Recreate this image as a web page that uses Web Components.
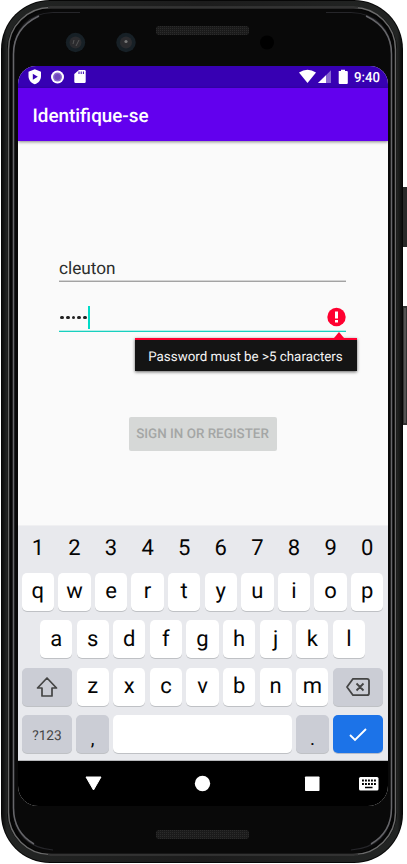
<!DOCTYPE html>
<html lang="pt"><head><meta charset="utf-8"><title>Identifique-se</title>
<style>html,body{margin:0;background:#fff}body{width:407px;height:864px;overflow:hidden;font-family:Roboto,"Noto Sans",sans-serif;text-rendering:geometricPrecision}</style></head>
<body>
<phone-frame>
<status-bar></status-bar>
<app-bar>Identifique-se</app-bar>
<login-form></login-form>
<soft-keyboard></soft-keyboard>
<nav-bar></nav-bar>
</phone-frame>
<script>
function define(name, html) {
  customElements.define(name, class extends HTMLElement {
    constructor() { super(); this.attachShadow({mode: 'open'}).innerHTML = html; }
  });
}
define('phone-frame', `<style>
:host{display:block;position:relative;box-sizing:border-box;width:407px;height:864px;padding:66px 19px 58px 18px}
svg{position:absolute;left:0;top:0}
main{position:relative;display:flex;flex-direction:column;width:370px;height:740px;border-radius:18px 18px 20px 20px;overflow:hidden;background:#fafafa}
</style>
<svg width="407" height="864">
<defs><pattern id="m" width="2" height="2" patternUnits="userSpaceOnUse"><rect width="2" height="2" fill="#1b1b1b"/><rect width="1" height="1" fill="#2b2b2b"/></pattern>
<linearGradient id="g" x1="0" x2="1" y1="0" y2="0"><stop offset="0" stop-color="#0c0c0c"/><stop offset=".012" stop-color="#222423"/><stop offset=".5" stop-color="#1c1c1c"/><stop offset=".988" stop-color="#222423"/><stop offset="1" stop-color="#0c0c0c"/></linearGradient></defs>
<rect x="402" y="187" width="6" height="60" rx="1" fill="#292929"/><rect x="402" y="306" width="6" height="119" rx="1" fill="#333"/><path d="M405 308V423" stroke="#777"/>
<rect x="1" y="0" width="402" height="863" rx="49" fill="#070707"/>
<rect x="2" y="1" width="400" height="861" rx="48" fill="url(#g)"/>
<rect x="7" y="7" width="390" height="848" rx="43" fill="#050505"/>
<rect x="8.500" y="7.500" width="387" height="847" rx="42" fill="none" stroke="#6a6a6a" stroke-width="1.500"/>
<path d="M48 7.500H358M48 854.500H358" stroke="#333" stroke-width="2"/>
<rect x="12" y="9" width="380" height="844.500" rx="40" fill="#090909"/>
<path d="M80 12.500H53C29 13 13.500 30 13.500 54V808C13.500 834 29 848 53 850M326 12.500H351C376 13 391.500 30 391.500 54V808C391.500 834 376 848 351 850" fill="none" stroke="#26262a" stroke-width="1.200"/>
<path d="M39 16Q13.500 28 13.500 54V808Q13.500 832 34 844M366 16Q391.500 28 391.500 54V808Q391.500 832 371 844" fill="none" stroke="#66666a" stroke-width="1.500"/>
<rect x="156" y="26" width="93" height="9" rx="3" fill="url(#m)"/><rect x="156" y="830" width="93" height="9" rx="3" fill="url(#m)"/>
<g><circle cx="75.500" cy="42.500" r="9.700" fill="#172026"/><circle cx="75.500" cy="42.500" r="6" fill="#2b2b2e"/><path d="M73 44l1-4M76 46l3-6" stroke="#555"/><circle cx="126" cy="42.500" r="9.700" fill="#172026"/><circle cx="126" cy="42.500" r="6" fill="#2b2b2e"/><circle cx="126" cy="41.500" r="1.600" fill="#777"/><circle cx="267" cy="42.500" r="7" fill="#000"/></g>
</svg><main><slot></slot></main>`);

define('status-bar', `<style>:host{display:block;height:22px;background:#3700b3;color:#fff}svg{display:block}text{font:500 14px Roboto,sans-serif}</style>
<svg width="370" height="22" fill="#fff"><path d="M16.800 3.200L23 5.800V10c0 4-2.500 7-6.200 8.300C13 17 10.500 14 10.500 10V5.800Z"/><path d="M14.800 7.800v6l5-3z" fill="#3700b3"/>
<circle cx="39.500" cy="11" r="6.500"/><circle cx="39.500" cy="11" r="4.500" fill="#8b68cf"/><circle cx="39.500" cy="11" r="3" fill="#7148bd"/>
<path d="M61 4h5.500q1.200 0 1.200 1.200v10.600q0 1.200-1.200 1.200h-9q-1.200 0-1.200-1.200V8z"/><path d="M61 5.500v2.500M63.200 5.500v2.500M65.400 5.500v2.500" stroke="#3700b3"/>
<path d="M281 6.500Q289.500 1 298 6.500L289.500 17z"/><path d="M300 17L313 4.200V17z" fill-opacity=".4"/><path d="M300 17l8-7.800V17z"/><path d="M320.700 5H323V3.700h4V5h1.800q1 0 1 1V17q0 1-1 1h-7.100q-1 0-1-1z"/>
<text x="336" y="16.300" textLength="26" lengthAdjust="spacingAndGlyphs">9:40</text></svg>`);

define('app-bar', `<style>:host{display:flex;align-items:center;box-sizing:border-box;height:52.500px;flex:none;padding:3px 14.500px 0;background:#6200ee;color:#fff;font-size:18.850px;font-weight:500;box-shadow:0 1px 3px #0007;z-index:1}</style><slot></slot>`);

define('error-tip', `<style>:host{position:absolute;right:-11px;top:56px;width:222px;height:33px;box-sizing:border-box;border-top:2px solid #ff0030;background:#141414;color:#f5f5f5;font-size:13.350px;line-height:36px;text-align:center;text-indent:-1px;box-shadow:0 1px 3px #0009;white-space:nowrap}
:host::before{content:"";position:absolute;right:13px;top:-8px;border:5px solid transparent;border-top:0;border-bottom:6px solid #ff0030}</style><slot></slot>`);

define('login-form', `<style>
:host{display:flex;flex-direction:column;align-items:center;box-sizing:border-box;height:384px;flex:none;padding:111.500px 1px 0 0}
.f{position:relative;width:287px;box-sizing:border-box;font-size:17.200px;color:#2b2d2c;height:30px;line-height:35px;border-bottom:1px solid #a3a3a3;box-shadow:0 -1px 0 #d4d4d4 inset}
.p{height:50px;border-color:#18d0bf;box-shadow:0 -1px 0 #b5eee8 inset}
.dots{display:flex;align-items:center;position:relative;gap:2px;height:23px;margin:24px 0 0 1px}
.dots b{width:3.800px;height:3.800px;border-radius:50%;background:#222}.dots i{width:2px;height:23px;background:#00dcc8;margin-left:-.500px}
.p svg{position:absolute;right:0;top:25px}
button{margin:84.500px 0 0 0;width:148px;height:34px;padding:2px 0 0;border:0;border-radius:2px;background:#d6d8d7;color:#a4a6a5;font:500 13.400px/32px Roboto,sans-serif;text-rendering:inherit;white-space:nowrap}
</style><div class="f">cleuton</div><div class="f p"><div class="dots"><b></b><b></b><b></b><b></b><b></b><i></i></div>
<svg width="19" height="20"><circle cx="9.500" cy="10" r="9.200" fill="#ff0030"/><path d="M8 4.500h3v7H8zM8 13h3v2.500H8z" fill="#fff"/></svg><error-tip>Password must be &gt;5 characters</error-tip></div><button disabled>SIGN IN OR REGISTER</button>`);

define('key-cap', `<style>:host{display:flex;align-items:center;justify-content:center;box-sizing:border-box;width:32.300px;height:38px;border-radius:5px;background:#fff;color:#050505;font-size:22px;line-height:36px;box-shadow:0 1px 0 #bfc1c5;padding-top:1px}
:host([num]){background:none;box-shadow:none;height:36px;padding-top:8px}
:host([dim]){background:#cbcdd5}
:host([wide]){width:50.300px}
:host([space]){width:179px}
:host([blue]){background:#1c73e8;width:50.300px;box-shadow:0 1px 0 #b5bccb}
:host([label]){font-size:13.700px;color:#444;padding-top:3px;width:50.300px}
:host([low]){padding-top:9px;font-size:19px}
</style><slot></slot>`);

const row = (s, a = '') => [...s].map(c => `<key-cap ${a}>${c}</key-cap>`).join('');
define('soft-keyboard', `<style>:host{display:flex;flex-direction:column;gap:9.600px;box-sizing:border-box;height:236px;flex:none;background:#e8e9ed;padding:1.500px 0 0;border-top:1px solid #f0f0f2;border-bottom:1px solid #b8b9bc}
div{display:flex;justify-content:center;gap:4.300px;padding-right:1px}</style>
<div>${row('1234567890', 'num')}</div><div>${row('qwertyuiop')}</div><div>${row('asdfghjkl')}</div>
<div><key-cap dim wide><svg width="24" height="24" fill="none" stroke="#444" stroke-width="1.700" stroke-linejoin="round"><path d="M12 3L2.500 13H7v8h10v-8h4.500z"/></svg></key-cap>${row('zxcvbnm')}<key-cap dim wide><svg width="26" height="20" fill="none" stroke="#444" stroke-width="1.800" stroke-linejoin="round"><path d="M8 1.800H22q2 0 2 2v12.400q0 2-2 2H8L2 10zM11.500 6.500l7 7m0-7l-7 7"/></svg></key-cap></div>
<div><key-cap dim label>?123</key-cap><key-cap dim low>,</key-cap><key-cap space></key-cap><key-cap dim low>.</key-cap><key-cap blue><svg width="20" height="16" fill="none" stroke="#fff" stroke-width="1.900"><path d="M2 8l5 5L18 2"/></svg></key-cap></div>`);

define('nav-bar', `<style>:host{display:block;height:45.500px;flex:none;background:#000}svg{display:block}</style>
<svg width="370" height="46" fill="#fff"><path d="M68 16H83L75.500 29z" stroke="#fff" stroke-linejoin="round"/><circle cx="184.500" cy="22.500" r="7.700"/><rect x="287" y="15.500" width="14.500" height="14.500" rx=".7"/><rect x="341" y="16" width="19.500" height="13.500" rx="1.500"/><path d="M344 19.500h14M344 23h14" stroke="#000" stroke-width="2" stroke-dasharray="1.900 1.100"/><path d="M347 26.500h7.500" stroke="#000" stroke-width="1.600"/></svg>`);
</script></body></html>
